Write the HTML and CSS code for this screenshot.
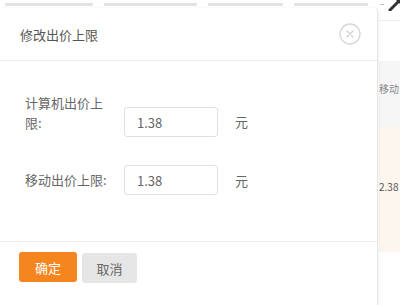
FILE: index.html
```html
<!DOCTYPE html>
<html lang="zh-CN">
<head>
  <meta charset="UTF-8">
  <title>修改出价上限</title>
  <link rel="stylesheet" href="styles.css">
</head>
<body>
  <div class="pagina">
    <div class="tiras">
      <span class="tira t1"></span>
      <span class="tira t2"></span>
      <span class="tira t3"></span>
      <span class="tira t4"></span>
      <span class="guion"></span>
      <svg class="marca" width="14" height="12" viewBox="0 0 14 12">
        <path d="M3 11 L12 2" stroke="#333" stroke-width="3" stroke-linecap="round"/>
        <path d="M9 1 L13 1 L13 5 Z" fill="#333"/>
      </svg>
    </div>

    <div class="escena">
      <div class="dialogo">
        <div class="cabecera">
          <span class="titulo">修改出价上限</span>
          <svg class="cerrar" width="22" height="22" viewBox="0 0 22 22">
            <circle cx="11" cy="11" r="10" fill="none" stroke="#d6d6d6" stroke-width="1.3"/>
            <path d="M8 8 L14 14 M14 8 L8 14" stroke="#d0d0d0" stroke-width="1.3" stroke-linecap="round"/>
          </svg>
        </div>

        <div class="cuerpo">
          <div class="fila fila-alta">
            <label class="etiqueta">计算机出价上限:</label>
            <input class="campo" type="text" value="1.38">
            <span class="unidad">元</span>
          </div>
          <div class="fila">
            <label class="etiqueta">移动出价上限:</label>
            <input class="campo" type="text" value="1.38">
            <span class="unidad">元</span>
          </div>
        </div>

        <div class="pie">
          <button class="boton boton-ok">确定</button>
          <button class="boton boton-cancelar">取消</button>
        </div>
      </div>

      <div class="lado">
        <div class="col">
          <div class="celda-top"></div>
          <div class="celda-head">移动</div>
          <div class="celda-dato">2.38</div>
        </div>
      </div>
    </div>
  </div>
</body>
</html>
```

FILE: styles.css
```css
html, body {
  margin: 0;
  padding: 0;
  width: 400px;
  height: 305px;
  overflow: hidden;
  background-color: #ffffff;
  font-family: "Noto Sans CJK SC", "Noto Sans", sans-serif;
  color: #666666;
}

.pagina {
  display: flex;
  flex-direction: column;
  height: 305px;
}

.tiras {
  position: relative;
  display: flex;
  align-items: flex-start;
  height: 8px;
  padding-top: 3px;
  box-sizing: border-box;
}

.tira {
  height: 3px;
  background-color: #e3e3e3;
  border-radius: 1px;
}

.t1 { width: 88px; margin-left: 5px; }
.t2 { width: 93px; margin-left: 11px; }
.t3 { width: 75px; margin-left: 11px; }
.t4 { width: 74px; margin-left: 11px; }

.guion {
  width: 4px;
  height: 1px;
  margin-left: 12px;
  margin-top: 1px;
  background-color: #bbbbbb;
}

.marca {
  position: absolute;
  top: -1px;
  right: -1px;
}

.escena {
  display: flex;
  flex: 1;
}

.dialogo {
  width: 377px;
  display: flex;
  flex-direction: column;
  background-color: #ffffff;
  border-right: 1px solid #e6e6e6;
  border-top-right-radius: 4px;
  box-shadow: 1px 0 3px rgba(0, 0, 0, 0.06);
  z-index: 1;
}

.cabecera {
  display: flex;
  align-items: center;
  justify-content: space-between;
  height: 53px;
  padding: 0 16px 0 20px;
  box-sizing: border-box;
  border-bottom: 1px solid #eeeeee;
}

.titulo {
  font-size: 13px;
  color: #555555;
}

.cerrar {
  display: block;
}

.cuerpo {
  padding: 32px 0 46px 25px;
}

.fila {
  display: flex;
  align-items: center;
  margin-top: 28px;
}

.fila-alta {
  align-items: flex-start;
  margin-top: 0;
}

.etiqueta {
  width: 88px;
  font-size: 13px;
  line-height: 20px;
  color: #666666;
}

.campo {
  width: 94px;
  height: 30px;
  margin-left: 11px;
  padding: 0 12px;
  box-sizing: border-box;
  border: 1px solid #e0e0e0;
  border-radius: 3px;
  font-family: "Noto Sans CJK SC", "Noto Sans", sans-serif;
  font-size: 13px;
  color: #666666;
  outline: none;
}

.fila-alta .campo {
  margin-top: 14px;
}

.unidad {
  margin-left: 17px;
  font-size: 13px;
  color: #666666;
}

.fila-alta .unidad {
  margin-top: 19px;
  line-height: 20px;
}

.pie {
  display: flex;
  gap: 5px;
  padding: 10px 0 0 19px;
  border-top: 1px solid #eeeeee;
}

.boton {
  height: 30px;
  border: none;
  border-radius: 3px;
  font-family: "Noto Sans CJK SC", "Noto Sans", sans-serif;
  font-size: 13px;
  padding: 0;
}

.boton-ok {
  width: 58px;
  background-color: #f5861f;
  color: #ffffff;
}

.boton-cancelar {
  width: 55px;
  margin-top: 1px;
  background-color: #e6e6e6;
  color: #666666;
}

.lado {
  flex: 1;
  overflow: hidden;
}

.col {
  padding-left: 1px;
  font-size: 10px;
  color: #888888;
}

.celda-top {
  height: 12px;
  border-bottom: 1px solid #eeeeee;
}

.celda-head {
  height: 66px;
  margin-top: 40px;
  line-height: 56px;
  background-color: #f6f6f6;
}

.celda-dato {
  height: 125px;
  padding-top: 52px;
  box-sizing: border-box;
  background-color: #fdf6ee;
  font-size: 10px;
  color: #555555;
}
```
